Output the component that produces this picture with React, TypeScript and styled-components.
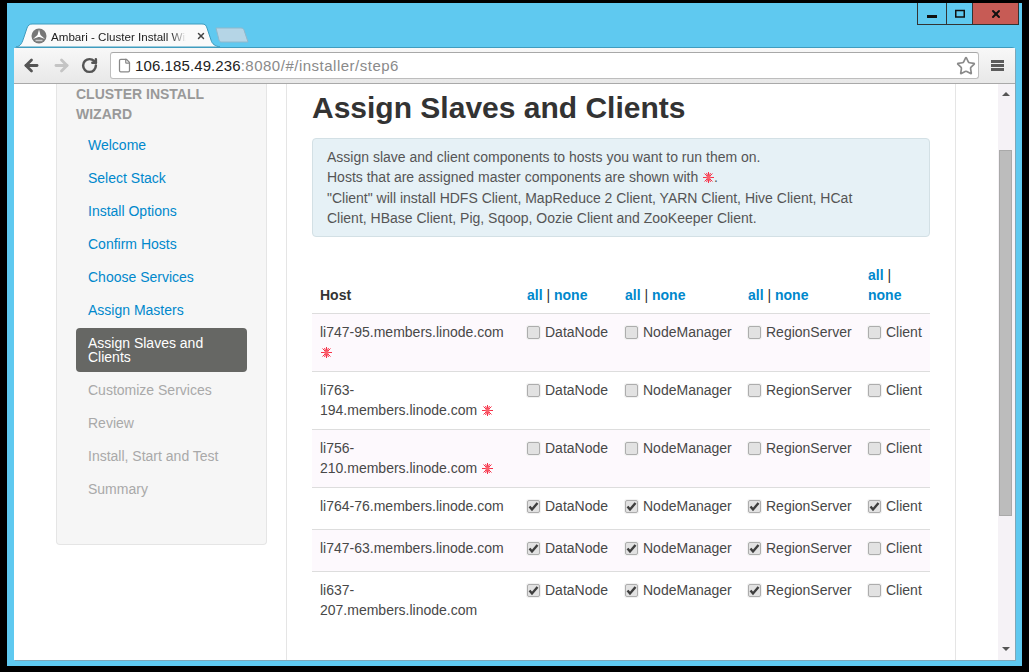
import * as React from 'react';
import styled, { createGlobalStyle } from 'styled-components';
import { ArrowLeft, ArrowRight, RotateCw, File, Star, X } from 'lucide-react';

const GlobalStyle = createGlobalStyle`
    html, body {
        margin: 0;
        padding: 0;
        background: #000;
    }
    * {
        box-sizing: border-box;
    }
`;

const Desktop = styled.div`
    width: 1029px;
    height: 672px;
    padding: 3px 7px 6px;
    background: #000;
    font-family: 'Liberation Sans', Arial, sans-serif;
    font-size: 14px;
    overflow: hidden;
`;

const Frame = styled.div`
    height: 100%;
    padding: 0 7px 6px;
    background: #5fc9f0;
    display: flex;
    flex-direction: column;
`;

const TabStrip = styled.div`
    height: 44px;
    flex: none;
    display: flex;
    justify-content: space-between;
    align-items: flex-start;
`;

const Tabs = styled.div`
    display: flex;
    align-items: flex-end;
    height: 44px;
`;

const Tab = styled.div`
    position: relative;
    width: 204px;
    height: 24px;
    margin-left: 2px;
    padding: 2px 0 0 15px;
    display: flex;
    align-items: center;
    gap: 4px;
    color: #222;
    font-size: 11.6px;
    svg.shape {
        position: absolute;
        left: 0;
        top: 0;
    }
`;

const TabTitle = styled.span`
    position: relative;
    width: 137px;
    padding-right: 2px;
    overflow: hidden;
    white-space: nowrap;
    -webkit-mask-image: linear-gradient(to right, #000 120px, transparent 135px);
    mask-image: linear-gradient(to right, #000 120px, transparent 135px);
`;

const Favicon = styled.svg`
    position: relative;
    flex: none;
`;

const TabClose = styled(X)`
    position: relative;
    flex: none;
    color: #444;
    margin-left: 4px;
`;

const NewTab = styled.svg`
    margin: 0 0 4px -5px;
`;

const WindowButtons = styled.div`
    display: flex;
    height: 22px;
    margin-right: -4px;
    border: 1px solid #333;
    border-top: 0;
`;

const WindowButton = styled.div<{ $w: number; $close?: boolean }>`
    width: ${(p) => p.$w}px;
    display: flex;
    align-items: center;
    justify-content: center;
    background: ${(p) => (p.$close ? '#c75b55' : 'transparent')};
    & + & {
        border-left: 1px solid #333;
    }
`;

const Browser = styled.div`
    flex: 1;
    min-height: 0;
    display: flex;
    flex-direction: column;
    background: #fff;
    border-top: 1px solid #3f9cbf;
    border-radius: 3px 3px 0 0;
    box-shadow: 1px 1px 0 #7fa7b8;
`;

const Toolbar = styled.div`
    height: 36px;
    flex: none;
    display: flex;
    align-items: center;
    padding: 0 10px 0 8px;
    background: linear-gradient(#f8f8f8, #e8e8e8);
    border-bottom: 1px solid #a9a9a9;
`;

const NavButton = styled.div<{ $w: number }>`
    width: ${(p) => p.$w}px;
    display: flex;
    justify-content: flex-start;
    align-items: center;
    flex: none;
`;

const AddressBar = styled.div`
    width: 869px;
    height: 27px;
    flex: none;
    margin-left: 7px;
    padding: 0 2px 0 6px;
    display: flex;
    align-items: center;
    gap: 3px;
    background: #fff;
    border: 1px solid #bdbdbd;
    border-top-color: #a8a8a8;
    border-radius: 3px;
    font-size: 15px;
    color: #222;
    span {
        color: #8a8a8a;
        letter-spacing: 0.5px;
    }
`;

const Url = styled.div`
    flex: 1;
    letter-spacing: 0.1px;
`;

const MenuIcon = styled.div`
    margin-left: 12px;
    width: 13px;
    height: 11px;
    border-top: 3px solid #5c5c5c;
    border-bottom: 3px solid #5c5c5c;
    position: relative;
    &::after {
        content: '';
        position: absolute;
        left: 0;
        right: 0;
        top: 1px;
        height: 3px;
        background: #5c5c5c;
    }
`;

const Viewport = styled.div`
    flex: 1;
    min-height: 0;
    display: flex;
    overflow: hidden;
    color: #333;
`;

const Page = styled.div`
    flex: 1;
    min-width: 0;
    padding-left: 42px;
    display: flex;
    align-items: stretch;
`;

const Sidebar = styled.aside`
    width: 211px;
    height: 461px;
    flex: none;
    padding: 0 19px;
    background: #f6f6f6;
    border: 1px solid #e5e5e5;
    border-top: 0;
    border-radius: 0 0 4px 4px;
`;

const SidebarTitle = styled.div`
    margin: 0 0 6px;
    font-weight: bold;
    line-height: 20px;
    color: #999;
`;

const NavList = styled.ul`
    list-style: none;
    margin: 0;
    padding: 0;
`;

const NavItem = styled.li<{ $state: 'done' | 'active' | 'todo' }>`
    padding: 8px 12px;
    margin-bottom: 3px;
    line-height: 14px;
    border-radius: 4px;
    color: ${(p) => (p.$state === 'done' ? '#0088cc' : p.$state === 'active' ? '#fff' : '#a9a9a9')};
    background: ${(p) => (p.$state === 'active' ? '#666764' : 'transparent')};
`;

const Content = styled.main`
    width: 670px;
    flex: none;
    margin-left: 19px;
    padding: 0 25px;
    border-left: 1px solid #e5e5e5;
    border-right: 1px solid #e5e5e5;
`;

const Heading = styled.h2`
    margin: 4px 0 10px;
    font-size: 30px;
    line-height: 40px;
    font-weight: bold;
    color: #333;
`;

const Alert = styled.div`
    height: 99px;
    padding: 8px 35px 8px 14px;
    background: #e6f1f6;
    border: 1px solid #d3e0e5;
    border-radius: 4px;
    line-height: 20.4px;
    color: #555;
`;

const Table = styled.table`
    width: 618px;
    margin-top: 20px;
    border-collapse: collapse;
    table-layout: fixed;
    th {
        padding: 8px 8px 7px;
        text-align: left;
        vertical-align: bottom;
        font-weight: bold;
        line-height: 20.4px;
        color: #333;
    }
    td {
        padding: 8px;
        vertical-align: top;
        line-height: 20.4px;
        border-top: 1px solid #ddd;
        color: #484848;
    }
    tbody tr:nth-child(odd) td {
        background: #fdf9fd;
    }
`;

const Link = styled.a`
    color: #0088cc;
`;

const Sep = styled.span`
    font-weight: normal;
`;

const Row = styled.tr<{ $h: number }>`
    height: ${(p) => p.$h}px;
`;

const CheckLabel = styled.label`
    display: flex;
    align-items: center;
    gap: 5px;
    white-space: nowrap;
`;

const Box = styled.span`
    width: 13px;
    height: 13px;
    flex: none;
    display: flex;
    align-items: center;
    justify-content: center;
    background: #e2e2e2;
    border: 1px solid #adadad;
    border-radius: 2px;
    box-shadow: 0 0 0 1px #f2f2f2;
`;

const Scrollbar = styled.div`
    width: 17px;
    flex: none;
    display: flex;
    flex-direction: column;
    align-items: center;
    background: #f5f2f6;
    padding: 8px 2px 0 0;
`;

const Arrow = styled.div<{ $down?: boolean }>`
    width: 0;
    height: 0;
    flex: none;
    border-left: 4px solid transparent;
    border-right: 4px solid transparent;
    ${(p) => (p.$down ? 'border-top: 4px solid #555; margin-top: 131px;' : 'border-bottom: 4px solid #555;')}
`;

const Thumb = styled.div`
    width: 13px;
    height: 366px;
    flex: none;
    margin-top: 54px;
    background: #bcbcbc;
    border: 1px solid #a9a9a9;
`;

const BurstIcon = styled.svg`
    margin-left: 1px;
    vertical-align: -1px;
`;

const Burst = () => (
    <BurstIcon width="11" height="11" viewBox="0 0 11 11">
        <path
            d="M5.500 0v11M0 5.500h11M1.500 1.500l8 8M9.500 1.500l-8 8M3.500 1l4 9M7.500 1l-4 9"
            stroke="#f7334a"
            strokeWidth="1"
            fill="none"
        />
        <circle cx="5.500" cy="5.500" r="2.200" fill="#f9606c" />
    </BurstIcon>
);

const Check = ({ on, label }: { on: boolean; label: string }) => (
    <CheckLabel>
        <Box>
            {on && (
                <svg width="11" height="11" viewBox="0 0 11 11">
                    <path d="M1.500 5.500 4 8.500 9.500 2" fill="none" stroke="#3f3f3f" strokeWidth="2.400" />
                </svg>
            )}
        </Box>
        {label}
    </CheckLabel>
);

const steps: { name: string; state: 'done' | 'active' | 'todo' }[] = [
    { name: 'Welcome', state: 'done' },
    { name: 'Select Stack', state: 'done' },
    { name: 'Install Options', state: 'done' },
    { name: 'Confirm Hosts', state: 'done' },
    { name: 'Choose Services', state: 'done' },
    { name: 'Assign Masters', state: 'done' },
    { name: 'Assign Slaves and Clients', state: 'active' },
    { name: 'Customize Services', state: 'todo' },
    { name: 'Review', state: 'todo' },
    { name: 'Install, Start and Test', state: 'todo' },
    { name: 'Summary', state: 'todo' },
];

const hosts = [
    { name: 'li747-95.members.linode.com', master: true, h: 58, checks: [false, false, false, false] },
    { name: 'li763-194.members.linode.com', master: true, h: 58, checks: [false, false, false, false] },
    { name: 'li756-210.members.linode.com', master: true, h: 58, checks: [false, false, false, false] },
    { name: 'li764-76.members.linode.com', master: false, h: 42, checks: [true, true, true, true] },
    { name: 'li747-63.members.linode.com', master: false, h: 42, checks: [true, true, true, false] },
    { name: 'li637-207.members.linode.com', master: false, h: 58, checks: [true, true, true, false] },
];

const columns = ['DataNode', 'NodeManager', 'RegionServer', 'Client'];

const AllNone = () => (
    <>
        <Link>all</Link> <Sep>|</Sep> <Link>none</Link>
    </>
);

const App = () => {
    return (
        <Desktop>
            <GlobalStyle />
            <Frame>
                <TabStrip>
                    <Tabs>
                        <Tab>
                            <svg className="shape" width="204" height="24" viewBox="0 0 204 24">
                                <path
                                    d="M0 24C5 23 6 20 8 14L11 5C12 2 14 1 16 1H186C189 1 190 2 191 5L195 17C196 21 199 23 204 24Z"
                                    fill="#fafafa"
                                    stroke="#3f9cbf"
                                />
                            </svg>
                            <Favicon width="16" height="16" viewBox="0 0 16 16">
                                <circle cx="8" cy="8" r="7.500" fill="#777" />
                                <path d="M8 1.500 9.500 7 14 11 8.500 9H7.500L2 11 6.500 7Z" fill="#fff" />
                                <path d="M4.500 12.500h7" stroke="#ccc" strokeWidth="1.500" />
                            </Favicon>
                            <TabTitle>Ambari - Cluster Install Wizard</TabTitle>
                            <TabClose size={10} strokeWidth={3.500} />
                        </Tab>
                        <NewTab width="34" height="16" viewBox="0 0 34 16">
                            <path d="M1 1H26C28 1 28.500 2 29 3L33 15H6C5 15 4.500 14 4 13Z" fill="#b5d5e6" stroke="#8fb8cc" />
                        </NewTab>
                    </Tabs>
                    <WindowButtons>
                        <WindowButton $w={28}>
                            <svg width="10" height="10" viewBox="0 0 10 10">
                                <rect y="6" width="10" height="3" fill="#111" />
                            </svg>
                        </WindowButton>
                        <WindowButton $w={26}>
                            <svg width="10" height="10" viewBox="0 0 10 10">
                                <rect x=".75" y="1.500" width="8.500" height="6.500" fill="none" stroke="#111" strokeWidth="1.500" />
                            </svg>
                        </WindowButton>
                        <WindowButton $w={46} $close>
                            <X size={12} strokeWidth={4} color="#111" />
                        </WindowButton>
                    </WindowButtons>
                </TabStrip>
                <Browser>
                    <Toolbar>
                        <NavButton $w={30}>
                            <ArrowLeft size={19} strokeWidth={3.500} color="#555" />
                        </NavButton>
                        <NavButton $w={29}>
                            <ArrowRight size={19} strokeWidth={3.500} color="#c4c4c4" />
                        </NavButton>
                        <NavButton $w={22}>
                            <RotateCw size={17} strokeWidth={3.500} color="#555" />
                        </NavButton>
                        <AddressBar>
                            <File size={15} color="#888" />
                            <Url>
                                106.185.49.236<span>:8080/#/installer/step6</span>
                            </Url>
                            <Star size={20} color="#8a8a8a" />
                        </AddressBar>
                        <MenuIcon />
                    </Toolbar>
                    <Viewport>
                        <Page>
                            <Sidebar>
                                <SidebarTitle>CLUSTER INSTALL WIZARD</SidebarTitle>
                                <NavList>
                                    {steps.map((s) => (
                                        <NavItem key={s.name} $state={s.state}>
                                            {s.name}
                                        </NavItem>
                                    ))}
                                </NavList>
                            </Sidebar>
                            <Content>
                                <Heading>Assign Slaves and Clients</Heading>
                                <Alert>
                                    Assign slave and client components to hosts you want to run them on.
                                    <br />
                                    Hosts that are assigned master components are shown with <Burst />.
                                    <br />
                                    "Client" will install HDFS Client, MapReduce 2 Client, YARN Client, Hive Client, HCat
                                    Client, HBase Client, Pig, Sqoop, Oozie Client and ZooKeeper Client.
                                </Alert>
                                <Table>
                                    <colgroup>
                                        <col style={{ width: 207 }} />
                                        <col style={{ width: 98 }} />
                                        <col style={{ width: 123 }} />
                                        <col style={{ width: 120 }} />
                                        <col style={{ width: 70 }} />
                                    </colgroup>
                                    <thead>
                                        <tr>
                                            <th>Host</th>
                                            {columns.map((c) => (
                                                <th key={c}>
                                                    <AllNone />
                                                </th>
                                            ))}
                                        </tr>
                                    </thead>
                                    <tbody>
                                        {hosts.map((host) => (
                                            <Row key={host.name} $h={host.h}>
                                                <td>
                                                    {host.name} {host.master && <Burst />}
                                                </td>
                                                {columns.map((c, i) => (
                                                    <td key={c}>
                                                        <Check on={host.checks[i]} label={c} />
                                                    </td>
                                                ))}
                                            </Row>
                                        ))}
                                    </tbody>
                                </Table>
                            </Content>
                        </Page>
                        <Scrollbar>
                            <Arrow />
                            <Thumb />
                            <Arrow $down />
                        </Scrollbar>
                    </Viewport>
                </Browser>
            </Frame>
        </Desktop>
    );
};

export default App;
